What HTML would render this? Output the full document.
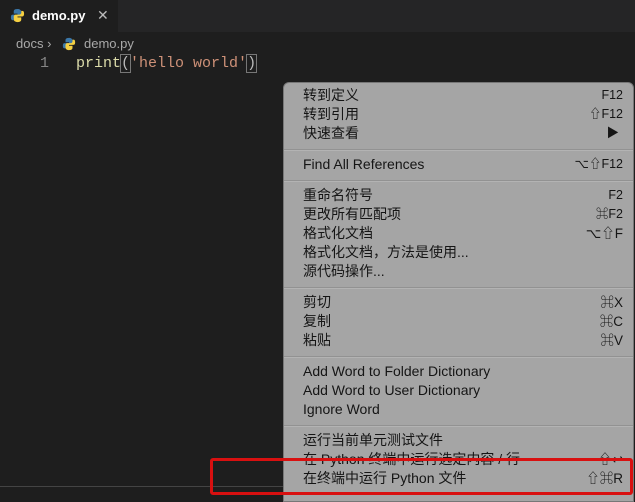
<!DOCTYPE html>
<html><head><meta charset="utf-8"><style>
*{margin:0;padding:0;box-sizing:border-box}
body{width:635px;height:498px;background:#1e1e1e;position:relative;overflow:hidden;font-family:"Liberation Sans","Noto Sans CJK SC",sans-serif}
.tabbar{position:absolute;left:0;top:0;width:635px;height:32px;background:#252526}
.tab{position:absolute;left:0;top:0;width:118px;height:32px;background:#1e1e1e;color:#fff;font-size:13px}
.abs{position:absolute}
.code{font-family:"Liberation Mono",monospace;font-size:15px}
.menu{position:absolute;left:283px;top:82px;width:351px;height:420px;background:#a5a5a5;border-radius:6px 6px 0 0;border:1px solid #777}
.it{position:absolute;left:19px;font-size:14px;color:#151515;white-space:nowrap;line-height:19px}
.sc{position:absolute;right:10px;font-size:12.5px;color:#151515;line-height:19px;white-space:nowrap}
.sep{position:absolute;left:0;width:349px;height:2px;background:#929292;border-bottom:1px solid #b3b3b3}
</style></head><body>
<div class="tabbar"></div>
<div class="tab">
<svg class="abs" style="left:10px;top:8px" width="15" height="15" viewBox="0 0 16 16"><path d="M8 1C4 1 4 3 4 4v2h4v1H3C1 7 1 9 1 10s0 3 2 3h1v-2c0-1 1-2 2-2h4c1 0 2-1 2-2V4c0-2-2-3-4-3z" fill="#3b77a8"/><path d="M8 15c4 0 4-2 4-3v-2H8V9h5c2 0 2-2 2-3s0-3-2-3h-1v2c0 1-1 2-2 2H6c-1 0-2 1-2 2v3c0 2 2 3 4 3z" fill="#f5d042"/></svg>
<span class="abs" style="left:32px;top:8px;font-weight:bold">demo.py</span>
<span class="abs" style="left:97px;top:7px;color:#bbb;font-size:14px">✕</span>
</div>
<span class="abs" style="left:16px;top:36px;color:#a9a9a9;font-size:13px">docs ›</span>
<svg class="abs" style="left:62px;top:37px" width="14" height="14" viewBox="0 0 16 16"><path d="M8 1C4 1 4 3 4 4v2h4v1H3C1 7 1 9 1 10s0 3 2 3h1v-2c0-1 1-2 2-2h4c1 0 2-1 2-2V4c0-2-2-3-4-3z" fill="#3b77a8"/><path d="M8 15c4 0 4-2 4-3v-2H8V9h5c2 0 2-2 2-3s0-3-2-3h-1v2c0 1-1 2-2 2H6c-1 0-2 1-2 2v3c0 2 2 3 4 3z" fill="#f5d042"/></svg>
<span class="abs" style="left:84px;top:36px;color:#a9a9a9;font-size:13px">demo.py</span>
<span class="abs code" style="left:40px;top:55px;color:#858585">1</span>
<span class="abs code" style="left:76px;top:55px;white-space:pre"><span style="color:#dcdcaa">print</span><span style="color:#bbb;outline:1px solid #777">(</span><span style="color:#ce9178">'hello world'</span><span style="color:#bbb;outline:1px solid #777">)</span></span>
<div class="abs" style="left:0;top:486px;width:283px;height:1px;background:#444"></div>
<div class="menu">
<div class="it" style="top:3px">转到定义</div><div class="sc" style="top:3px">F12</div>
<div class="it" style="top:22px">转到引用</div><div class="sc" style="top:22px">⇧F12</div>
<div class="it" style="top:41px">快速查看</div><div class="sc" style="top:41px;right:14px">▶</div>
<div class="sep" style="top:66px"></div>
<div class="it" style="top:72px">Find All References</div><div class="sc" style="top:72px">⌥⇧F12</div>
<div class="sep" style="top:97px"></div>
<div class="it" style="top:103px">重命名符号</div><div class="sc" style="top:103px">F2</div>
<div class="it" style="top:122px">更改所有匹配项</div><div class="sc" style="top:122px">⌘F2</div>
<div class="it" style="top:141px">格式化文档</div><div class="sc" style="top:141px;font-size:13.5px">⌥⇧F</div>
<div class="it" style="top:160px">格式化文档，方法是使用...</div>
<div class="it" style="top:179px">源代码操作...</div>
<div class="sep" style="top:204px"></div>
<div class="it" style="top:210px">剪切</div><div class="sc" style="top:210px;font-size:13.5px">⌘X</div>
<div class="it" style="top:229px">复制</div><div class="sc" style="top:229px;font-size:13.5px">⌘C</div>
<div class="it" style="top:248px">粘贴</div><div class="sc" style="top:248px;font-size:13.5px">⌘V</div>
<div class="sep" style="top:273px"></div>
<div class="it" style="top:279px">Add Word to Folder Dictionary</div>
<div class="it" style="top:298px">Add Word to User Dictionary</div>
<div class="it" style="top:317px">Ignore Word</div>
<div class="sep" style="top:342px"></div>
<div class="it" style="top:348px">运行当前单元测试文件</div>
<div class="it" style="top:367px">在 Python 终端中运行选定内容 / 行</div><div class="sc" style="top:367px;font-size:13.5px">⇧↩</div>
<div class="it" style="top:386px">在终端中运行 Python 文件</div><div class="sc" style="top:386px;font-size:13.5px">⇧⌘R</div>
</div>
<div class="abs" style="left:210px;top:458px;width:423px;height:37px;border:3px solid #d81010;border-radius:3px"></div>
</body></html>
